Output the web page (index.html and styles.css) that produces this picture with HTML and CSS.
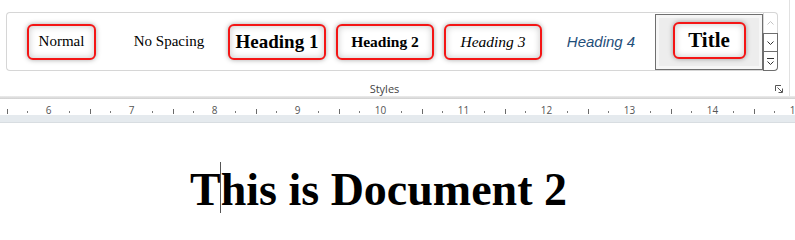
FILE: index.html
```html
<!DOCTYPE html>
<html lang="en">
<head>
  <meta charset="UTF-8" />
  <title>Document 2 - Styles</title>
  <link rel="stylesheet" href="styles.css">
</head>
<body>

  <div class="ribbon">
    <div class="group">
      <div class="gallery">
        <div class="styles">
          <div class="style boxed normal">Normal</div>
          <div class="style no-spacing">No Spacing</div>
          <div class="style boxed h1">Heading 1</div>
          <div class="style boxed h2">Heading 2</div>
          <div class="style boxed h3">Heading 3</div>
          <div class="style h4">Heading 4</div>
          <div class="selected">
            <div class="style boxed title">Title</div>
          </div>
        </div>
        <div class="scroller">
          <div class="scroll up">
            <svg width="7" height="4" viewBox="0 0 7 4"><path d="M0.5 3.5L3.5 0.5L6.5 3.5" fill="none" stroke="#c2c2c2" /></svg>
          </div>
          <div class="scroll down">
            <svg width="7" height="4" viewBox="0 0 7 4"><path d="M0.5 0.5L3.5 3.5L6.5 0.5" fill="none" stroke="#333" /></svg>
          </div>
          <div class="scroll more">
            <svg width="7" height="7" viewBox="0 0 7 7"><path d="M0 0.5H7" stroke="#333" /><path d="M0.5 3.5L3.5 6.5L6.5 3.5" fill="none" stroke="#333" /></svg>
          </div>
        </div>
      </div>
      <div class="group-footer">
        <span class="group-label">Styles</span>
        <span class="launcher">
          <svg width="8" height="8" viewBox="0 0 8 8"><path d="M0.5 6V0.5H6" fill="none" stroke="#555" /><path d="M2.5 2.5L7 7M7.5 3.5V7.5H3.5" fill="none" stroke="#555" /></svg>
        </span>
      </div>
    </div>
  </div>

  <div class="ruler">
    <div class="ruler-scale">
      <span class="unit"><i class="cell"><b class="dot"></b></i><i class="cell"><b class="tick"></b></i><i class="cell"><b class="dot"></b></i><i class="cell num">6</i></span>
      <span class="unit"><i class="cell"><b class="dot"></b></i><i class="cell"><b class="tick"></b></i><i class="cell"><b class="dot"></b></i><i class="cell num">7</i></span>
      <span class="unit"><i class="cell"><b class="dot"></b></i><i class="cell"><b class="tick"></b></i><i class="cell"><b class="dot"></b></i><i class="cell num">8</i></span>
      <span class="unit"><i class="cell"><b class="dot"></b></i><i class="cell"><b class="tick"></b></i><i class="cell"><b class="dot"></b></i><i class="cell num">9</i></span>
      <span class="unit"><i class="cell"><b class="dot"></b></i><i class="cell"><b class="tick"></b></i><i class="cell"><b class="dot"></b></i><i class="cell num">10</i></span>
      <span class="unit"><i class="cell"><b class="dot"></b></i><i class="cell"><b class="tick"></b></i><i class="cell"><b class="dot"></b></i><i class="cell num">11</i></span>
      <span class="unit"><i class="cell"><b class="dot"></b></i><i class="cell"><b class="tick"></b></i><i class="cell"><b class="dot"></b></i><i class="cell num">12</i></span>
      <span class="unit"><i class="cell"><b class="dot"></b></i><i class="cell"><b class="tick"></b></i><i class="cell"><b class="dot"></b></i><i class="cell num">13</i></span>
      <span class="unit"><i class="cell"><b class="dot"></b></i><i class="cell"><b class="tick"></b></i><i class="cell"><b class="dot"></b></i><i class="cell num">14</i></span>
      <span class="unit"><i class="cell"><b class="dot"></b></i><i class="cell"><b class="tick"></b></i><i class="cell"><b class="dot"></b></i><i class="cell num">15</i></span>
    </div>
  </div>
  <div class="ruler-band"></div>

  <div class="page">
    <h1 class="doc-title">T<span class="caret"></span>his is Document 2</h1>
  </div>

</body>
</html>
```

FILE: styles.css
```css
* { box-sizing: border-box; }
html, body { margin: 0; padding: 0; background: #fff; font-family: 'Open Sans', sans-serif; overflow: hidden; }

/* ribbon */
.ribbon {
  height: 99px;
  background: linear-gradient(to bottom, #fff 0, #fff 96px, #ececec 96px, #d0d0d0 99px);
}

.group {
  width: 790px; height: 96px; border-right: 1px solid #e1e1e1;
  display: flex; flex-direction: column;
}

.gallery { display: flex; margin: 12px 0 0 6px; width: 772px; height: 59px; }

.styles {
  flex: 1; display: flex; align-items: center; gap: 10px; padding-left: 20px;
  border: 1px solid #d6d6d6; border-right: none; border-radius: 4px 0 0 4px;
}

.style {
  width: 98px; height: 36px; flex: none;
  display: flex; align-items: center; justify-content: center;
  font-family: 'Liberation Serif', serif; font-size: 15px; color: #000; white-space: nowrap;
}

.boxed {
  background: #fff; border: 2px solid #f41515; border-radius: 6px;
  box-shadow: 0 0 5px rgba(0, 0, 0, 0.35), inset 0 0 7px rgba(0, 0, 0, 0.22);
}

.normal { width: 69px; margin-right: 14px; }
.h1 { font-weight: bold; font-size: 19px; }
.h2 { font-weight: bold; font-size: 15.5px; }
.h3 { font-style: italic; font-size: 15.5px; }
.h4 { font-family: 'Liberation Sans', sans-serif; font-style: italic; color: #1f4e79; }

.selected {
  width: 108px; height: 56px; margin-left: -5px; flex: none;
  display: flex; align-items: center; justify-content: center;
  border: 1px solid #6f6f6f; background: #ededed;
  box-shadow: inset 0 0 0 3px #f6f6f6;
}

.title { width: 73px; height: 37px; font-weight: bold; font-size: 21px; margin-top: -3px; }

.scroller { width: 15px; display: flex; flex-direction: column; }
.scroll { display: flex; align-items: center; justify-content: center; }
.scroll.up { height: 21px; border: 1px solid #d6d6d6; border-bottom: none; border-radius: 0 4px 0 0; }
.scroll.down { height: 19px; border: 1px solid #6e6e6e; }
.scroll.more { height: 19px; border: 1px solid #6e6e6e; border-top: none; border-radius: 0 0 4px 0; }

.group-footer { display: flex; align-items: center; margin-top: 10px; height: 15px; }
.group-label { flex: 1; text-align: center; font-size: 11px; line-height: 15px; color: #444; }
.launcher { width: 20px; padding-left: 6px; display: flex; }

/* ruler */
.ruler { height: 16px; background: #fff; }
.ruler-scale { display: flex; height: 16px; margin-left: -24.125px; }
.unit { display: flex; width: 83px; flex: none; }
.cell { width: 20.75px; flex: none; display: flex; justify-content: center; align-items: flex-start; font-style: normal; }
.tick { width: 1px; height: 5px; margin-top: 10px; background: #6a6a6a; }
.dot { width: 1px; height: 2px; margin-top: 12px; background: #7a7a7a; }
.num { font-size: 10px; line-height: 14px; padding-top: 4px; color: #555; }
.ruler-band { height: 8px; background: #e5eaee; border-bottom: 1px solid #d8dde1; }

/* page */
.page { padding: 44px 0 0 190px; }
.doc-title { margin: 0; font: bold 46px/46px 'Liberation Serif', serif; color: #000; white-space: nowrap; }
.caret { position: relative; }
.caret::before {
  content: ""; position: absolute; left: -1px; top: -2px;
  width: 1px; height: 54px; background: #555;
}
```
